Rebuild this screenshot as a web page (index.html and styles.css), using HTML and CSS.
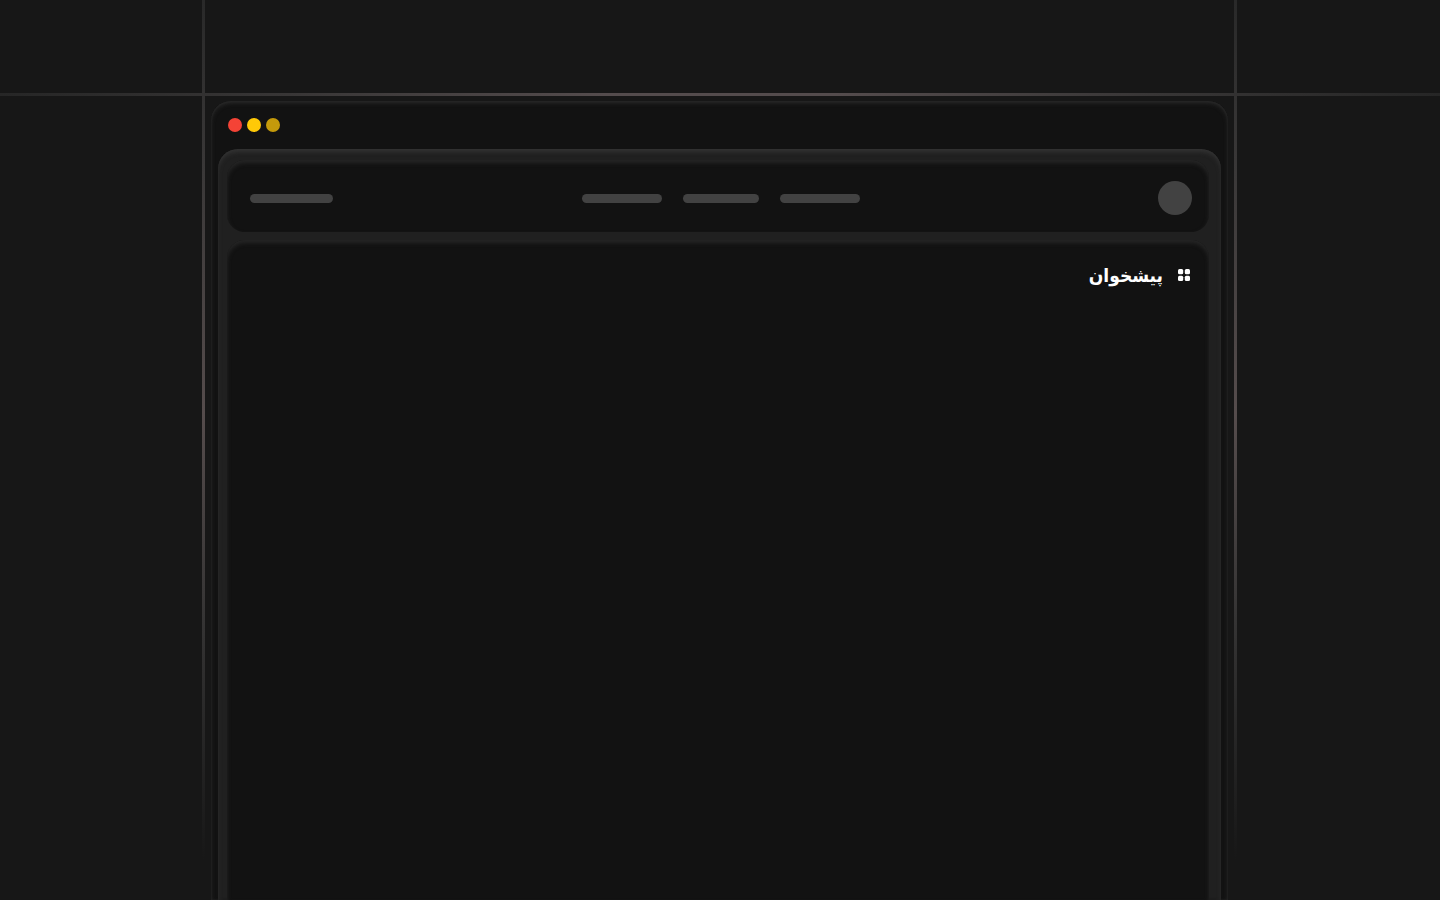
FILE: index.html
```html
<!DOCTYPE html>
<html lang="fa">
<head>
    <meta charset="UTF-8">
    <meta name="viewport" content="width=device-width, initial-scale=1.0">
    <title>پیشخوان</title>
    <link rel="stylesheet" href="styles.css">
</head>
<body>
    <div class="page">
        <div class="line line-top"></div>
        <main class="stage">
            <div class="line line-left"></div>
            <div class="line line-right"></div>
            <div class="window">
                <div class="dots">
                    <span class="dot red"></span>
                    <span class="dot yellow"></span>
                    <span class="dot gold"></span>
                </div>
                <div class="screen">
                    <header class="topbar">
                        <span class="bar logo-bar"></span>
                        <div class="menu">
                            <span class="bar"></span>
                            <span class="bar short"></span>
                            <span class="bar"></span>
                        </div>
                        <span class="avatar"></span>
                    </header>
                    <section class="panel">
                        <h1 class="title" dir="rtl">
                            <svg class="icon" viewBox="0 0 12 12" fill="#fff" aria-hidden="true">
                                <rect x="0" y="0" width="5.2" height="5.2" rx="1.5"/>
                                <rect x="6.8" y="0" width="5.2" height="5.2" rx="1.5"/>
                                <rect x="0" y="6.8" width="5.2" height="5.2" rx="1.5"/>
                                <rect x="6.8" y="6.8" width="5.2" height="5.2" rx="1.5"/>
                            </svg>
                            <span>پیشخوان</span>
                        </h1>
                    </section>
                </div>
            </div>
        </main>
    </div>
</body>
</html>
```
FILE: styles.css
```css
* {
    box-sizing: border-box;
}
body {
    margin: 0;
    background: #171717;
    color: #fff;
    font-family: "DejaVu Sans Condensed", "DejaVu Sans", sans-serif;
}
.page {
    position: relative;
    display: flex;
    min-height: 100vh;
    padding: 0 203px 0 202px;
    overflow: hidden;
}
.stage {
    position: relative;
    display: flex;
    flex: 1;
    padding: 101px 9px 0;
}

/* guide lines behind the window */
.line {
    position: absolute;
}
.line-top {
    top: 93px;
    left: 0;
    right: 0;
    height: 3px;
    background: linear-gradient(to right, #262626, #383636 20%, #544c4d 42%, #544c4d 58%, #383636 80%, #262626);
}
.line-left,
.line-right {
    top: 0;
    bottom: 40px;
    width: 3px;
    background: linear-gradient(to bottom, #292929, #3a3838 20%, #554c4c 48%, #353434 72%, #171717);
}
.line-left {
    left: 0;
}
.line-right {
    right: 0;
}

.window {
    display: flex;
    flex-direction: column;
    flex: 1;
    padding: 17px 7px 0;
    background: #121212;
    border-radius: 20px 20px 0 0;
    box-shadow: inset 0 2px 4px #2b2b2b, inset 0 0 2px #242424;
}
.dots {
    display: flex;
    gap: 5px;
    padding: 0 10px 17px;
}
.dot {
    width: 14px;
    height: 14px;
    border-radius: 50%;
}
.red {
    background: #f44336;
}
.yellow {
    background: #ffc907;
}
.gold {
    background: #c49a0b;
}
.screen {
    display: flex;
    flex-direction: column;
    gap: 8px;
    flex: 1;
    padding: 11px 12px 0 9px;
    background: #202020;
    border-radius: 20px 20px 0 0;
    box-shadow: inset 0 3px 4px #333, inset 0 0 3px #1a1a1a;
}

.topbar,
.panel {
    background: #121212;
    box-shadow: inset 0 3px 4px #262626;
}
.topbar {
    display: grid;
    grid-template-columns: 1fr auto 1fr;
    align-items: center;
    height: 72px;
    padding: 4px 17px 0 23px;
    border-radius: 18px;
}
.menu {
    display: flex;
    gap: 21px;
}
.bar {
    width: 80px;
    height: 9px;
    background: #424242;
    border-radius: 5px;
}
.logo-bar {
    width: 83px;
}
.short {
    width: 76px;
}
.avatar {
    justify-self: end;
    width: 34px;
    height: 34px;
    background: #424242;
    border-radius: 50%;
}
.panel {
    flex: 1;
    padding: 20px 19px;
    border-radius: 18px 18px 0 0;
}
.title {
    display: flex;
    align-items: center;
    gap: 15px;
    margin: 0;
    font-size: 19px;
    font-weight: bold;
    line-height: 30px;
}
.icon {
    width: 12px;
    height: 12px;
}
```
